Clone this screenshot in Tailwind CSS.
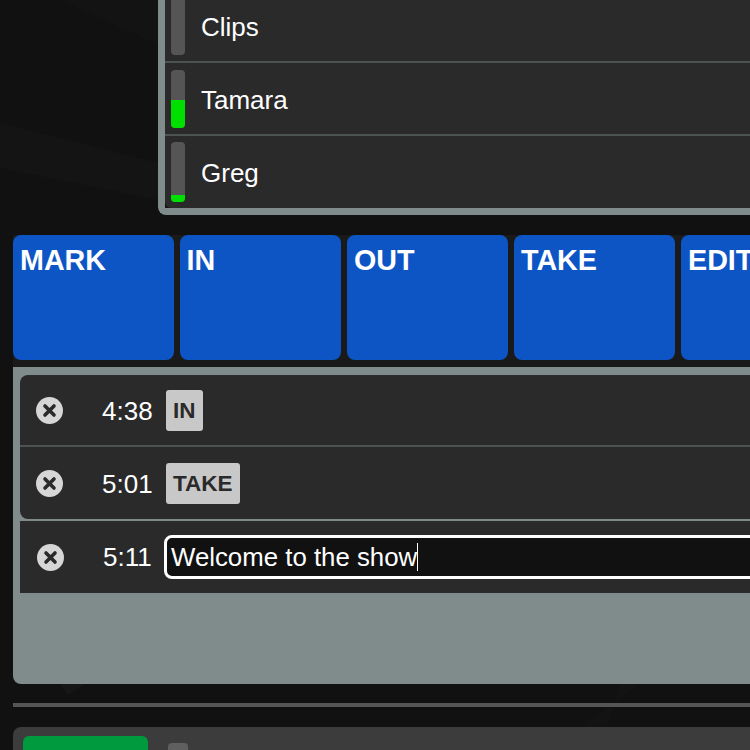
<!DOCTYPE html>
<html lang="en">
  <head>
    <meta charset="UTF-8" />
    <title>Show control</title>
    <script src="https://cdn.jsdelivr.net/npm/@tailwindcss/browser@4"></script>
  </head>
  <body class="bg-[#111111] overflow-hidden font-['Liberation_Sans',Arial,sans-serif] text-white">
    <div class="relative h-[750px] w-[750px] overflow-hidden">
      <!-- faint background streaks -->
      <svg class="absolute inset-0" width="750" height="750" viewBox="0 0 750 750">
        <polygon points="0,123 158,163 158,200 0,168" fill="#141414" />
        <polygon points="60,0 158,0 158,45" fill="#131313" />
        <polygon points="60,684 85,684 68,695" fill="#161616" />
        <polygon points="750,640 750,684 620,684 600,750 550,750 640,684" fill="#131313" />
      </svg>

      <div class="relative w-[1000px]">
        <!-- mixer panel -->
        <div class="ml-[158px] -mt-[10px] border-b-[7px] border-l-[7px] border-[#7f8c8b] rounded-bl-lg">
          <div class="bg-[#2a2a2a] rounded-bl-md">
            <div class="flex items-center h-[73px] border-b-2 border-[#4c5352] pl-1.5">
              <div class="relative w-[14px] h-[60px] mt-[-2px] bg-[#555555] rounded overflow-hidden"></div>
              <span class="ml-4 pt-[4px] text-[26px]">Clips</span>
            </div>
            <div class="flex items-center h-[73px] border-b-2 border-[#4c5352] pl-1.5">
              <div class="relative flex flex-col justify-end w-[14px] h-[58px] bg-[#555555] rounded overflow-hidden">
                <div class="h-[28px] bg-[#00e000]"></div>
              </div>
              <span class="ml-4 pt-[4px] text-[26px]">Tamara</span>
            </div>
            <div class="flex items-center h-[72px] pl-1.5">
              <div class="relative flex flex-col justify-end w-[14px] h-[60px] bg-[#555555] rounded overflow-hidden">
                <div class="h-[7px] bg-[#00e000]"></div>
              </div>
              <span class="ml-4 pt-[2px] text-[26px]">Greg</span>
            </div>
          </div>
        </div>

        <!-- cue buttons -->
        <div class="ml-[13px] mt-[20px] pb-[7px] flex gap-[6.5px] bg-[#1a1a1a]">
          <div class="w-[160.5px] h-[125px] shrink-0 rounded-lg bg-[#0d55c5] px-[7px] pt-[8px] text-[28.7px] leading-[34px] font-bold">MARK</div>
          <div class="w-[160.5px] h-[125px] shrink-0 rounded-lg bg-[#0d55c5] px-[6.5px] pt-[8px] text-[28.7px] leading-[34px] font-bold">IN</div>
          <div class="w-[160.5px] h-[125px] shrink-0 rounded-lg bg-[#0d55c5] px-[7px] pt-[8px] text-[28.7px] leading-[34px] font-bold">OUT</div>
          <div class="w-[160.5px] h-[125px] shrink-0 rounded-lg bg-[#0d55c5] px-[7px] pt-[8px] text-[28.7px] leading-[34px] font-bold">TAKE</div>
          <div class="w-[160.5px] h-[125px] shrink-0 rounded-lg bg-[#0d55c5] px-[7px] pt-[8px] text-[28.7px] leading-[34px] font-bold whitespace-nowrap">EDIT</div>
        </div>

        <!-- log panel -->
        <div class="ml-[13px] h-[317px] bg-[#7f8c8b] rounded-b-lg pl-[7px] pt-[8px]">
          <div class="bg-[#2a2a2a] rounded-l-lg">
            <div class="flex items-center h-[72px] border-b-2 border-[#4c5352]">
              <svg class="ml-[16px] shrink-0" width="27" height="27" viewBox="0 0 27 27">
                <circle cx="13.5" cy="13.5" r="13.5" fill="#d6d6d6" />
                <path d="M9 9l9 9M18 9l-9 9" stroke="#2a2a2a" stroke-width="3.6" stroke-linecap="round" />
              </svg>
              <span class="ml-[39px] w-[50px] pt-[2px] text-[26px] whitespace-nowrap">4:38</span>
              <span class="ml-[14px] flex items-center h-[41px] px-[7px] pt-[1px] rounded-[3px] bg-[#c8c8c8] text-[#2a2a2a] text-[22.5px] font-bold">IN</span>
            </div>
            <div class="flex items-center h-[72px]">
              <svg class="ml-[16px] shrink-0" width="27" height="27" viewBox="0 0 27 27">
                <circle cx="13.5" cy="13.5" r="13.5" fill="#d6d6d6" />
                <path d="M9 9l9 9M18 9l-9 9" stroke="#2a2a2a" stroke-width="3.6" stroke-linecap="round" />
              </svg>
              <span class="ml-[39px] w-[50px] pt-[2px] text-[26px] whitespace-nowrap">5:01</span>
              <span class="ml-[14px] flex items-center h-[41px] px-[7px] pt-[1px] rounded-[3px] bg-[#c8c8c8] text-[#2a2a2a] text-[22.5px] font-bold">TAKE</span>
            </div>
          </div>
          <div class="mt-[2px] flex items-center h-[72px] bg-[#2a2a2a]">
            <svg class="ml-[17px] shrink-0" width="27" height="27" viewBox="0 0 27 27">
              <circle cx="13.5" cy="13.5" r="13.5" fill="#d6d6d6" />
              <path d="M9 9l9 9M18 9l-9 9" stroke="#2a2a2a" stroke-width="3.6" stroke-linecap="round" />
            </svg>
            <span class="ml-[39px] w-[50px] text-[26px] whitespace-nowrap">5:11</span>
            <div class="ml-[11px] flex items-center flex-1 h-[44px] border-[3px] border-white rounded-lg bg-[#111111] pl-[4px] text-[25.8px]">
              <span>Welcome to the show</span><span class="w-px h-[28px] bg-white"></span>
            </div>
          </div>
        </div>

        <div class="ml-[13px] mt-[19px] h-[4px] bg-[#555555]"></div>

        <!-- bottom strip -->
        <div class="ml-[13px] mt-[20px] flex items-start h-[60px] bg-[#3c3c3c] rounded-t-lg pl-[10px] pt-[9px]">
          <div class="w-[125px] h-[50px] bg-[#009a3e] rounded-md"></div>
          <div class="ml-[20px] mt-[7px] w-[20px] h-[40px] bg-[#5f5f5f] rounded"></div>
        </div>
      </div>
    </div>
  </body>
</html>
